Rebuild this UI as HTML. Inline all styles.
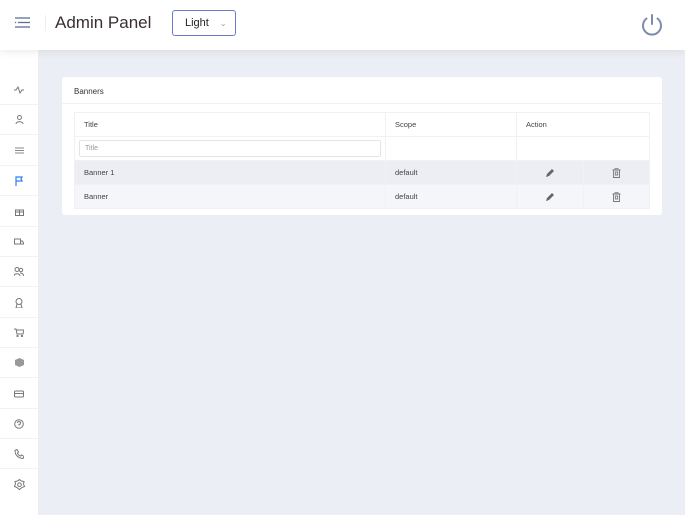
<!DOCTYPE html>
<html><head><meta charset="utf-8"><style>
*{margin:0;padding:0;box-sizing:border-box}
body{width:685px;height:515px;overflow:hidden;background:#eceef5;font-family:"Liberation Sans",sans-serif;position:relative}
.hdr{position:absolute;left:0;top:0;width:685px;height:50px;background:#fff;box-shadow:0 2px 8px rgba(0,0,0,.08);z-index:2}
.side{position:absolute;left:0;top:50px;width:38px;height:465px;background:#fff}
.si{position:absolute;left:0;width:38px;height:30px;border-bottom:1px solid #f1f2f5;display:flex;align-items:center;justify-content:center}
.card{position:absolute;left:62px;top:77px;width:600px;height:138px;background:#fff;border-radius:3px}
.ct{height:27px;border-bottom:1px solid #f0f1f4;font-size:8px;color:#333;padding:10px 12px}
table{position:absolute;left:12px;top:35px;width:576px;border-collapse:collapse;font-size:7.5px;color:#444}
td{border:1px solid #f0f1f4;padding:0 9px;height:24px}
.ic{text-align:center;vertical-align:middle}
.ic svg{display:inline-block;vertical-align:middle}
</style></head><body>
<div class="hdr">
<svg style="position:absolute;left:15px;top:17px" width="15" height="11"><g stroke="#5e6f93" stroke-width="1.3"><line x1="0" y1="1" x2="15" y2="1"/><line x1="3" y1="5.5" x2="15" y2="5.5"/><line x1="0" y1="10" x2="15" y2="10"/></g><circle cx="0.6" cy="5.5" r=".7" fill="#5e6f93"/></svg>
<div style="position:absolute;left:45px;top:15px;width:1px;height:16px;background:#eee"></div>
<div style="position:absolute;left:55px;top:13px;font-size:17px;color:#3a2e35">Admin Panel</div>
<div style="position:absolute;left:172px;top:10px;width:64px;height:26px;border:1px solid #6b7ccf;border-radius:3px;font-size:11px;color:#222;padding:6px 0 0 12px">Light <span style="color:#999;font-size:8px;margin-left:8px">&#8964;</span></div>
<svg style="position:absolute;left:640px;top:13px" width="24" height="24" fill="none" stroke="#7b8bab" stroke-width="2" stroke-linecap="round"><path d="M6.5 5.5A9 9 0 1 0 17.5 5.5"/><line x1="12" y1="2" x2="12" y2="11"/></svg>
</div>
<div class="side">
<div class="si" style="top:25px"><svg width="10" height="8" fill="none" stroke="#777" stroke-width="1"><path d="M0 4h2l2-3 2 6 2-3h2"/></svg></div>
<div class="si" style="top:55px"><svg width="9" height="9" fill="none" stroke="#777"><circle cx="4.5" cy="2.5" r="2"/><path d="M1 9c0-3 7-3 7 0"/></svg></div>
<div class="si" style="top:86px"><svg width="9" height="7" stroke="#888"><path d="M0 1h9M0 3.5h9M0 6h9"/></svg></div>
<div class="si" style="top:116px"><svg width="9" height="10" fill="none" stroke="#2f80ed" stroke-width="1.2"><path d="M1 10V1h6l-1 2 1 2H1"/></svg></div>
<div class="si" style="top:147px"><svg width="9" height="9" fill="none" stroke="#777"><rect x=".5" y="3" width="8" height="5.5"/><path d="M4.5 3v6M.5 5h8"/></svg></div>
<div class="si" style="top:177px"><svg width="10" height="8" fill="none" stroke="#777"><path d="M.5 1h6v5h-6zM6.5 3h2l1 2v1h-3"/></svg></div>
<div class="si" style="top:207px"><svg width="10" height="9" fill="none" stroke="#777"><circle cx="3" cy="2.5" r="2"/><circle cx="7" cy="3" r="1.7"/><path d="M0 9c0-3 6-3 6 0M6 6c2 0 3.5 1 3.5 3"/></svg></div>
<div class="si" style="top:238px"><svg width="8" height="10" fill="none" stroke="#777"><circle cx="4" cy="3.5" r="3"/><path d="M2 6l-1 4h6l-1-4"/></svg></div>
<div class="si" style="top:268px"><svg width="10" height="9" fill="none" stroke="#777"><path d="M0 1h2l1 5h6l1-4H2.5"/><circle cx="3.5" cy="8" r=".6"/><circle cx="8" cy="8" r=".6"/></svg></div>
<div class="si" style="top:298px"><svg width="9" height="9" fill="#999"><path d="M4.5 0L9 2v5L4.5 9 0 7V2z"/></svg></div>
<div class="si" style="top:329px"><svg width="10" height="8" fill="none" stroke="#777"><rect x=".5" y="1" width="9" height="6" rx="1"/><path d="M.5 3.5h9"/></svg></div>
<div class="si" style="top:359px"><svg width="10" height="10" fill="none" stroke="#777"><circle cx="5" cy="5" r="4.3"/><path d="M3.5 4a1.5 1.5 0 1 1 1.5 1.5V6.5"/></svg></div>
<div class="si" style="top:389px"><svg width="10" height="10" fill="none" stroke="#777"><path d="M1 1.5l2-1 1.5 2.5-1 1c.5 1.5 1.5 2.5 3 3l1-1 2.5 1.5-1 2C4 9 1 6 1 1.5z"/></svg></div>
<div class="si" style="top:419px;border:0"><svg width="11" height="11" fill="none" stroke="#777"><path d="M5.5 .5l2 1.5 2.5.5-.5 2.5 1 2.5-2.5 1-2.5 2-2.5-2-2.5-1 1-2.5L1 2.5 3.5 2z"/><circle cx="5.5" cy="5.7" r="1.8"/></svg></div>
</div>
<div class="card">
<div class="ct">Banners</div>
<table>
<tr style="height:23px"><td style="width:311px">Title</td><td style="width:131px">Scope</td><td colspan="2">Action</td></tr>
<tr><td style="padding:0 4px"><div style="height:17px;border:1px solid #e3e4e8;border-radius:2px;font-size:7px;color:#999;padding:4px 5px">Title</div></td><td></td><td colspan="2"></td></tr>
<tr style="background:#eceef3"><td>Banner 1</td><td>default</td><td class="ic" style="width:67px"><svg width="10" height="10"><path d="M1 9l1-3 5-5 2 2-5 5z" fill="#666"/></svg></td><td class="ic"><svg width="9" height="10" fill="none" stroke="#777" stroke-width=".9"><path d="M.5 2h8M3 2V.7h3V2M1.5 2v7.5h6V2"/><rect x="3.3" y="4" width="2.4" height="3"/></svg></td></tr>
<tr style="background:#f5f6fa"><td>Banner</td><td>default</td><td class="ic"><svg width="10" height="10"><path d="M1 9l1-3 5-5 2 2-5 5z" fill="#666"/></svg></td><td class="ic"><svg width="9" height="10" fill="none" stroke="#777" stroke-width=".9"><path d="M.5 2h8M3 2V.7h3V2M1.5 2v7.5h6V2"/><rect x="3.3" y="4" width="2.4" height="3"/></svg></td></tr>
</table>
</div>
</body></html>
